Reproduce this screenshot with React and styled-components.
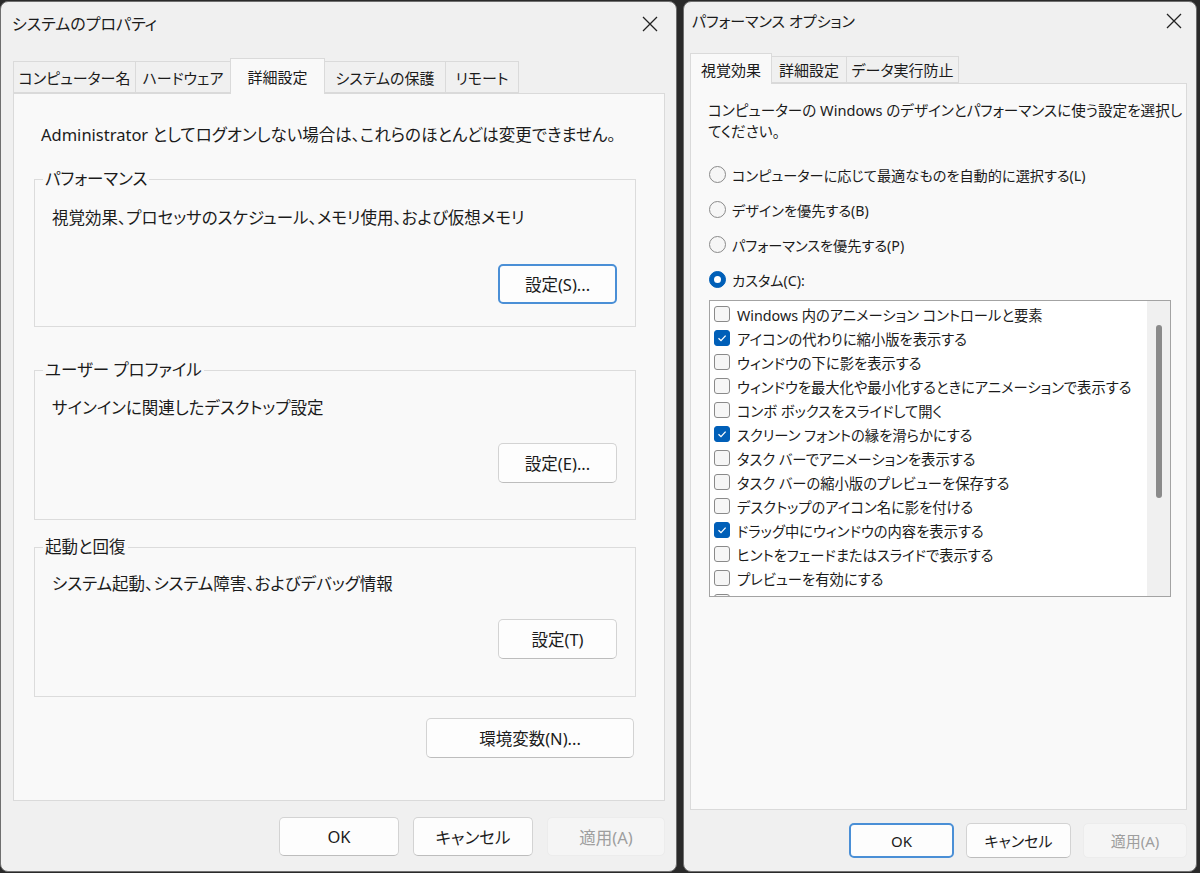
import styled, { createGlobalStyle } from "styled-components";

const GlobalStyle = createGlobalStyle`
  html, body {
    margin: 0;
    padding: 0;
    background: #2a2a2a;
  }
  body {
    font-family: "Noto Sans", "Noto Sans CJK JP", sans-serif;
    font-feature-settings: "palt";
    color: #1b1b1b;
  }
`;

const Desktop = styled.div`
  display: flex;
  gap: 6px;
  height: 873px;
  padding-top: 1px;
  box-sizing: border-box;
  overflow: hidden;
`;

const Window = styled.section`
  width: ${({ $width }) => $width}px;
  height: 871px;
  box-sizing: border-box;
  background: #f0f0f0;
  border: 1px solid #6f6f6f;
  border-radius: 8px;
  display: flex;
  flex-direction: column;
  flex-shrink: 0;
`;

const TitleBar = styled.header`
  height: ${({ $h }) => $h}px;
  display: flex;
  align-items: center;
  justify-content: space-between;
  padding: ${({ $pad }) => $pad};
  flex-shrink: 0;
`;

const Title = styled.span`
  font-size: ${({ $size }) => $size}px;
  line-height: 1;
`;

const CloseIcon = () => (
  <svg width="16" height="16" viewBox="0 0 16 16">
    <path d="M1 1 L15 15 M15 1 L1 15" stroke="#222" strokeWidth="1.3" fill="none" />
  </svg>
);

const Body = styled.div`
  padding: ${({ $pad }) => $pad};
  display: flex;
  flex-direction: column;
`;

const TabBar = styled.div`
  display: flex;
  align-items: flex-end;
  position: relative;
  z-index: 1;
`;

const Tab = styled.div`
  width: ${({ $w }) => $w}px;
  height: ${({ $active, $h }) => ($active ? $h + 4 : $h)}px;
  margin-bottom: ${({ $active }) => ($active ? -1 : 0)}px;
  box-sizing: border-box;
  display: flex;
  align-items: center;
  justify-content: center;
  font-size: ${({ $size }) => $size}px;
  background: ${({ $active }) => ($active ? "#f9f9f9" : "#f0f0f0")};
  border: 1px solid #dadada;
  border-bottom: ${({ $active }) => ($active ? "none" : "1px solid #dadada")};
  margin-right: -1px;
  white-space: nowrap;
`;

const Panel = styled.div`
  height: ${({ $h }) => $h}px;
  box-sizing: border-box;
  background: #f9f9f9;
  border: 1px solid #dadada;
  padding: ${({ $pad }) => $pad};
  display: flex;
  flex-direction: column;
`;

const Intro = styled.p`
  margin: 0 0 0 ${({ $left }) => $left || 0}px;
  font-size: ${({ $size }) => $size}px;
  line-height: ${({ $lh }) => $lh}px;
  white-space: nowrap;
`;

const Group = styled.fieldset`
  margin: ${({ $top }) => $top}px 0 0 0;
  padding: 0 18px ${({ $bottom }) => $bottom}px 17px;
  border: 1px solid #dcdcdc;
  min-width: 0;
  display: flex;
  flex-direction: column;
`;

const Legend = styled.legend`
  font-size: 16.5px;
  line-height: 24px;
  padding: 0 2px;
  margin-left: -9px;
`;

const Desc = styled.p`
  margin: ${({ $top }) => $top}px 0 0 0;
  font-size: 16.5px;
  line-height: 24px;
`;

const ButtonRow = styled.div`
  display: flex;
  justify-content: flex-end;
  margin-top: ${({ $top }) => $top || 0}px;
  padding-right: ${({ $right }) => $right || 0}px;
`;

const Button = styled.button`
  width: ${({ $w }) => $w}px;
  height: ${({ $h }) => $h}px;
  box-sizing: border-box;
  font-family: inherit;
  font-feature-settings: "palt";
  font-size: ${({ $size }) => $size}px;
  color: #1b1b1b;
  background: #fdfdfd;
  border: 1px solid #d3d3d3;
  border-bottom-color: #bdbdbd;
  border-radius: 5px;
  padding: 0;
  cursor: default;

  &[data-focus="true"] {
    border: 2px solid #4a8fd6;
  }

  &:disabled {
    background: #f5f5f5;
    border: 1px solid #ececec;
    color: #9e9e9e;
  }
`;

const Footer = styled.div`
  display: flex;
  justify-content: flex-end;
  gap: ${({ $gap }) => $gap}px;
  padding: ${({ $pad }) => $pad};
`;

const RadioList = styled.div`
  display: flex;
  flex-direction: column;
  margin-top: 15px;
`;

const RadioRow = styled.label`
  height: 35px;
  display: flex;
  align-items: center;
  gap: 6px;
  font-size: 14.2px;
  white-space: nowrap;
`;

const RadioDot = styled.span`
  width: 17px;
  height: 17px;
  box-sizing: border-box;
  border-radius: 50%;
  flex-shrink: 0;
  display: flex;
  align-items: center;
  justify-content: center;
  border: 1px solid ${({ $on }) => ($on ? "#005fb8" : "#8a8a8a")};
  background: ${({ $on }) => ($on ? "#005fb8" : "#f6f6f6")};

  &::after {
    content: "";
    display: ${({ $on }) => ($on ? "block" : "none")};
    width: 7px;
    height: 7px;
    border-radius: 50%;
    background: #fff;
  }
`;

const ListBox = styled.div`
  margin-top: 3px;
  height: 297px;
  box-sizing: border-box;
  border: 1px solid #a3a3a3;
  background: #fff;
  display: flex;
`;

const ListItems = styled.div`
  flex: 1;
  overflow: hidden;
  padding: 1px 0 0 4px;
`;

const CheckRow = styled.div`
  height: 24px;
  display: flex;
  align-items: center;
  gap: 7px;
  font-size: 14.3px;
  white-space: nowrap;
`;

const Box = styled.span`
  width: 16px;
  height: 16px;
  box-sizing: border-box;
  border-radius: 3px;
  flex-shrink: 0;
  display: flex;
  align-items: center;
  justify-content: center;
  border: 1px solid ${({ $on }) => ($on ? "#005fb8" : "#8a8a8a")};
  background: ${({ $on }) => ($on ? "#005fb8" : "#f6f6f6")};
`;

const ScrollTrack = styled.div`
  width: 23px;
  background: #f0f0f0;
  flex-shrink: 0;
  display: flex;
  justify-content: center;
`;

const ScrollThumb = styled.div`
  width: 6px;
  height: 173px;
  margin-top: 24px;
  margin-left: 1px;
  border-radius: 3px;
  background: #8a8a8a;
`;

const Check = () => (
  <svg width="10" height="10" viewBox="0 0 10 10">
    <path d="M1.5 5.2 L4 7.6 L8.6 2.6" stroke="#fff" strokeWidth="1.3" fill="none" />
  </svg>
);

const leftTabs = [
  { label: "コンピューター名", w: 123 },
  { label: "ハードウェア", w: 96 },
  { label: "詳細設定", w: 95 },
  { label: "システムの保護", w: 122 },
  { label: "リモート", w: 74 },
];
const rightTabs = [
  { label: "視覚効果", w: 82 },
  { label: "詳細設定", w: 76 },
  { label: "データ実行防止", w: 113 },
];

const radios = [
  { label: "コンピューターに応じて最適なものを自動的に選択する(L)", on: false },
  { label: "デザインを優先する(B)", on: false },
  { label: "パフォーマンスを優先する(P)", on: false },
  { label: "カスタム(C):", on: true },
];

const effects = [
  { label: "Windows 内のアニメーション コントロールと要素", on: false },
  { label: "アイコンの代わりに縮小版を表示する", on: true },
  { label: "ウィンドウの下に影を表示する", on: false },
  { label: "ウィンドウを最大化や最小化するときにアニメーションで表示する", on: false },
  { label: "コンボ ボックスをスライドして開く", on: false },
  { label: "スクリーン フォントの縁を滑らかにする", on: true },
  { label: "タスク バーでアニメーションを表示する", on: false },
  { label: "タスク バーの縮小版のプレビューを保存する", on: false },
  { label: "デスクトップのアイコン名に影を付ける", on: false },
  { label: "ドラッグ中にウィンドウの内容を表示する", on: true },
  { label: "ヒントをフェードまたはスライドで表示する", on: false },
  { label: "プレビューを有効にする", on: false },
  { label: "マウス ポインターの下に影を表示する", on: false },
];

function SystemProperties() {
  return (
    <Window $width={677}>
      <TitleBar $h={44} $pad="0 18px 0 11px">
        <Title $size={16}>システムのプロパティ</Title>
        <CloseIcon />
      </TitleBar>
      <Body $pad="12px 11px 0 12px">
        <TabBar>
          {leftTabs.map((t) => (
            <Tab key={t.label} $w={t.w} $active={t.label === "詳細設定"} $h={32} $size={15}>
              {t.label}
            </Tab>
          ))}
        </TabBar>
        <Panel $h={708} $pad="29px 28px 0 20px">
          <Intro $size={16.5} $lh={24} $left={7}>
            Administrator としてログオンしない場合は、これらのほとんどは変更できません。
          </Intro>
          <Group $top={20} $bottom={22}>
            <Legend>パフォーマンス</Legend>
            <Desc $top={15}>視覚効果、プロセッサのスケジュール、メモリ使用、および仮想メモリ</Desc>
            <ButtonRow $top={34}>
              <Button $w={119} $h={40} $size={16.5} data-focus="true">設定(S)...</Button>
            </ButtonRow>
          </Group>
          <Group $top={31} $bottom={36}>
            <Legend>ユーザー プロファイル</Legend>
            <Desc $top={14}>サインインに関連したデスクトップ設定</Desc>
            <ButtonRow $top={23}>
              <Button $w={119} $h={40} $size={16.5}>設定(E)...</Button>
            </ButtonRow>
          </Group>
          <Group $top={15} $bottom={37}>
            <Legend>起動と回復</Legend>
            <Desc $top={13}>システム起動、システム障害、およびデバッグ情報</Desc>
            <ButtonRow $top={23}>
              <Button $w={119} $h={40} $size={16.5}>設定(T)</Button>
            </ButtonRow>
          </Group>
          <ButtonRow $top={21} $right={2}>
            <Button $w={208} $h={40} $size={16.5}>環境変数(N)...</Button>
          </ButtonRow>
        </Panel>
      </Body>
      <Footer $gap={14} $pad="16px 11px 0 0">
        <Button $w={120} $h={39} $size={16.5}>OK</Button>
        <Button $w={120} $h={39} $size={16.5}>キャンセル</Button>
        <Button $w={118} $h={39} $size={16.5} disabled>適用(A)</Button>
      </Footer>
    </Window>
  );
}

function PerformanceOptions() {
  return (
    <Window $width={514}>
      <TitleBar $h={38} $pad="0 14px 0 8px">
        <Title $size={15}>パフォーマンス オプション</Title>
        <CloseIcon />
      </TitleBar>
      <Body $pad="13px 9px 0 6px">
        <TabBar>
          {rightTabs.map((t) => (
            <Tab key={t.label} $w={t.w} $active={t.label === "視覚効果"} $h={27} $size={15}>
              {t.label}
            </Tab>
          ))}
        </TabBar>
        <Panel $h={727} $pad="16px 15px 0 18px">
          <Intro $size={14.6} $lh={21} $left={-1}>
            コンピューターの Windows のデザインとパフォーマンスに使う設定を選択し
            <br />
            てください。
          </Intro>
          <RadioList>
            {radios.map((r) => (
              <RadioRow key={r.label}>
                <RadioDot $on={r.on} />
                {r.label}
              </RadioRow>
            ))}
          </RadioList>
          <ListBox>
            <ListItems>
              {effects.map((e) => (
                <CheckRow key={e.label}>
                  <Box $on={e.on}>{e.on && <Check />}</Box>
                  {e.label}
                </CheckRow>
              ))}
            </ListItems>
            <ScrollTrack>
              <ScrollThumb />
            </ScrollTrack>
          </ListBox>
        </Panel>
      </Body>
      <Footer $gap={12} $pad="13px 9px 0 0">
        <Button $w={105} $h={35} $size={15} data-focus="true">OK</Button>
        <Button $w={105} $h={35} $size={15}>キャンセル</Button>
        <Button $w={104} $h={35} $size={15} disabled>適用(A)</Button>
      </Footer>
    </Window>
  );
}

export default function App() {
  return (
    <>
      <GlobalStyle />
      <Desktop>
        <SystemProperties />
        <PerformanceOptions />
      </Desktop>
    </>
  );
}
